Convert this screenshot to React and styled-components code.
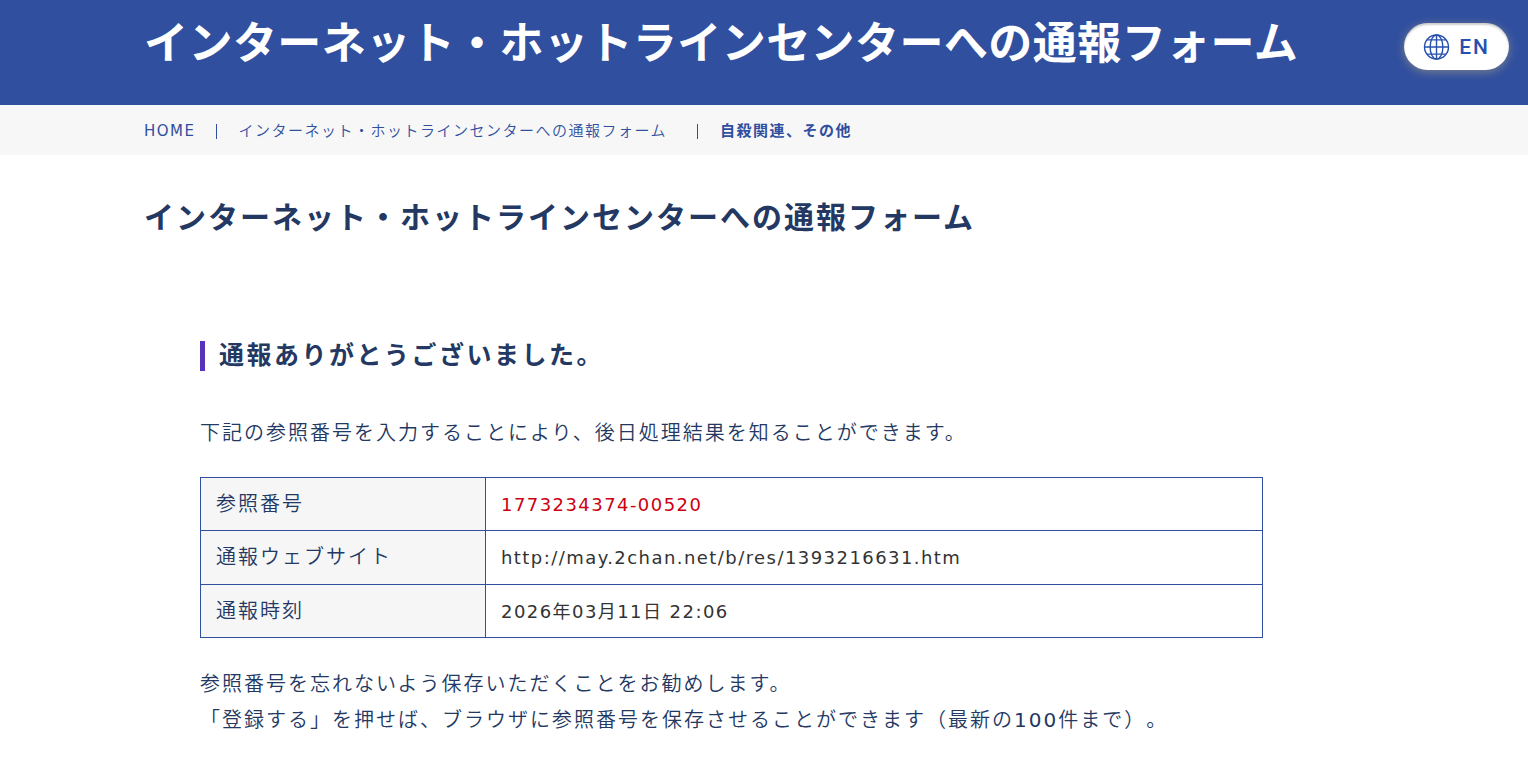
import React from 'react';
import styled, { createGlobalStyle } from 'styled-components';

const GlobalStyle = createGlobalStyle`
  * {
    box-sizing: border-box;
    margin: 0;
    padding: 0;
  }

  body {
    background: #fff;
    color: #233862;
    font-family: 'DejaVu Sans', 'Noto Sans CJK JP', sans-serif;
    font-size: 20px;
    font-weight: 350;
    letter-spacing: 2px;
    line-height: 36px;
    text-spacing-trim: space-all;
  }
`;

/* latin letters and digits are too thin at the body weight */
const Latin = styled.span`
  font-weight: 400;
`;

const Header = styled.header`
  position: relative;
  padding: 12px 0 29px;
  background: #304f9f;
`;

const Inner = styled.div`
  width: calc(100% - 48px);
  max-width: 1240px;
  margin: 0 auto;
`;

const SiteTitle = styled.p`
  color: #fff;
  font-size: 44px;
  font-weight: 700;
  letter-spacing: 0.01em;
  line-height: 64px;
`;

const LanguageLink = styled.a`
  position: absolute;
  top: 23px;
  right: 19px;
  display: flex;
  align-items: center;
  gap: 9px;
  height: 47px;
  padding: 0 19px;
  border-radius: 24px;
  background: #fff;
  box-shadow: 0 2px 10px rgba(170, 160, 130, 0.6), inset 0 2px 2px rgba(0, 0, 0, 0.2);
  color: #2750ae;
  font-family: Roboto, sans-serif;
  font-size: 21px;
  font-weight: 500;
  text-decoration: none;
`;

const BreadcrumbBar = styled.nav`
  padding: 11px 0 9px;
  background: #f7f7f7;
`;

const BreadcrumbList = styled.ol`
  display: flex;
  align-items: center;
  list-style: none;
  color: #304f9f;
  font-size: 15px;
  letter-spacing: 0.1em;
  line-height: 30px;
`;

const BreadcrumbItem = styled.li`
  display: flex;
  align-items: center;
  font-weight: ${({ $current }) => ($current ? 700 : 350)};

  &:not(:last-child)::after {
    content: '';
    width: 1px;
    height: 15px;
    margin: 0 22px 0 ${({ $wide }) => ($wide ? 30 : 20)}px;
    background: currentColor;
  }
`;

const BreadcrumbLink = styled.a`
  color: inherit;
  text-decoration: none;
`;

const PageTitle = styled.h1`
  padding: 38px 0 98px;
  font-size: 30px;
  font-weight: 700;
  line-height: 50px;
`;

const Article = styled.section`
  padding: 0 121px 24px 56px;
`;

const Heading = styled.h2`
  margin-bottom: 44px;
  padding-left: 14px;
  border-left: 5px solid #5533bb;
  font-size: 25px;
  font-weight: 700;
  letter-spacing: 0.1em;
  line-height: 30px;
`;

const ReportTable = styled.table`
  width: 100%;
  height: 161px;
  margin: 26px 0 28px;
  border-collapse: collapse;
  table-layout: fixed;
`;

const LabelCell = styled.th`
  width: 285px;
  padding: 8px 15px;
  border: 1px solid #304f9f;
  background: #f6f6f6;
  font-weight: 350;
  text-align: left;
`;

const ValueCell = styled.td`
  padding: 9px 15px 7px;
  border: 1px solid #304f9f;
  color: ${({ $highlight }) => ($highlight ? '#cc0011' : '#333')};
  font-size: 18px;
  font-weight: 400;
  letter-spacing: 0.08em;
`;

const rows = [
  { label: '参照番号', value: '1773234374-00520', highlight: true },
  { label: '通報ウェブサイト', value: 'http://may.2chan.net/b/res/1393216631.htm' },
  { label: '通報時刻', value: '2026年03月11日 22:06' },
];

const GlobeIcon = () => (
  <svg width="27" height="27" viewBox="0 0 27 27" fill="none" stroke="currentColor" strokeWidth="1.4" aria-hidden="true">
    <circle cx="13.5" cy="14" r="12" />
    <ellipse cx="13.5" cy="14" rx="6.4" ry="12" />
    <path d="M13.5 2v24M1.5 14h24M4 6.9h19M4 21.1h19" />
  </svg>
);

const App = () => {
  return (
    <>
      <GlobalStyle />
      <Header>
        <Inner>
          <SiteTitle>インターネット・ホットラインセンターへの通報フォーム</SiteTitle>
        </Inner>
        <LanguageLink href="#en">
          <GlobeIcon />
          EN
        </LanguageLink>
      </Header>

      <BreadcrumbBar>
        <Inner>
          <BreadcrumbList>
            <BreadcrumbItem>
              <BreadcrumbLink href="#home">
                <Latin>HOME</Latin>
              </BreadcrumbLink>
            </BreadcrumbItem>
            <BreadcrumbItem $wide>
              <BreadcrumbLink href="#form">インターネット・ホットラインセンターへの通報フォーム</BreadcrumbLink>
            </BreadcrumbItem>
            <BreadcrumbItem $current>自殺関連、その他</BreadcrumbItem>
          </BreadcrumbList>
        </Inner>
      </BreadcrumbBar>

      <Inner as="main">
        <PageTitle>インターネット・ホットラインセンターへの通報フォーム</PageTitle>
        <Article>
          <Heading>通報ありがとうございました。</Heading>
          <p>下記の参照番号を入力することにより、後日処理結果を知ることができます。</p>
          <ReportTable>
            <tbody>
              {rows.map((row) => (
                <tr key={row.label}>
                  <LabelCell scope="row">{row.label}</LabelCell>
                  <ValueCell $highlight={row.highlight}>{row.value}</ValueCell>
                </tr>
              ))}
            </tbody>
          </ReportTable>
          <p>
            参照番号を忘れないよう保存いただくことをお勧めします。
            <br />
            「登録する」を押せば、ブラウザに参照番号を保存させることができます（最新の<Latin>100</Latin>件まで）。
          </p>
        </Article>
      </Inner>
    </>
  );
};

export default App;
